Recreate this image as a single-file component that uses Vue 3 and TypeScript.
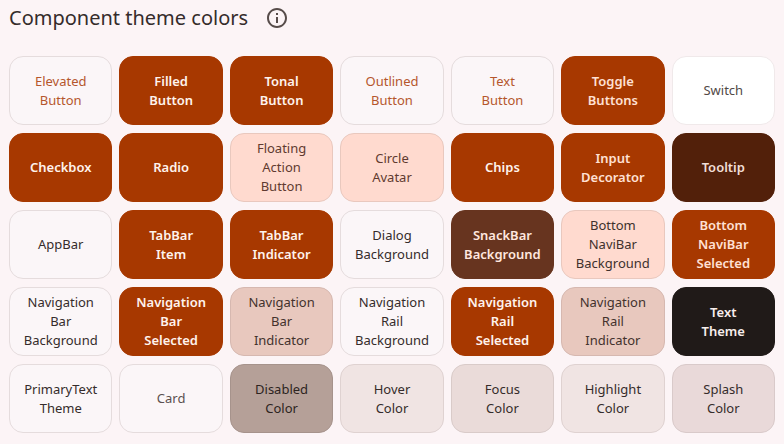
<script setup lang="ts">
interface Swatch {
  lines: string[]
  tone: string
}

const swatches: Swatch[] = [
  { lines: ['Elevated', 'Button'], tone: 'surface accent' },
  { lines: ['Filled', 'Button'], tone: 'primary' },
  { lines: ['Tonal', 'Button'], tone: 'primary' },
  { lines: ['Outlined', 'Button'], tone: 'surface accent' },
  { lines: ['Text', 'Button'], tone: 'surface accent' },
  { lines: ['Toggle', 'Buttons'], tone: 'primary blush' },
  { lines: ['Switch'], tone: 'white' },
  { lines: ['Checkbox'], tone: 'primary' },
  { lines: ['Radio'], tone: 'primary' },
  { lines: ['Floating', 'Action', 'Button'], tone: 'container' },
  { lines: ['Circle', 'Avatar'], tone: 'container' },
  { lines: ['Chips'], tone: 'primary' },
  { lines: ['Input', 'Decorator'], tone: 'primary blush' },
  { lines: ['Tooltip'], tone: 'tooltip' },
  { lines: ['AppBar'], tone: 'surface' },
  { lines: ['TabBar', 'Item'], tone: 'primary' },
  { lines: ['TabBar', 'Indicator'], tone: 'primary' },
  { lines: ['Dialog', 'Background'], tone: 'surface' },
  { lines: ['SnackBar', 'Background'], tone: 'snackbar' },
  { lines: ['Bottom', 'NaviBar', 'Background'], tone: 'container deep' },
  { lines: ['Bottom', 'NaviBar', 'Selected'], tone: 'primary blush' },
  { lines: ['Navigation', 'Bar', 'Background'], tone: 'surface' },
  { lines: ['Navigation', 'Bar', 'Selected'], tone: 'primary' },
  { lines: ['Navigation', 'Bar', 'Indicator'], tone: 'indicator' },
  { lines: ['Navigation', 'Rail', 'Background'], tone: 'surface' },
  { lines: ['Navigation', 'Rail', 'Selected'], tone: 'primary' },
  { lines: ['Navigation', 'Rail', 'Indicator'], tone: 'indicator' },
  { lines: ['Text', 'Theme'], tone: 'ink' },
  { lines: ['PrimaryText', 'Theme'], tone: 'surface' },
  { lines: ['Card'], tone: 'surface muted' },
  { lines: ['Disabled', 'Color'], tone: 'disabled' },
  { lines: ['Hover', 'Color'], tone: 'hover' },
  { lines: ['Focus', 'Color'], tone: 'focus' },
  { lines: ['Highlight', 'Color'], tone: 'hover' },
  { lines: ['Splash', 'Color'], tone: 'splash' },
]
</script>

<template>
  <main class="panel">
    <header class="heading">
      <h1>Component theme colors</h1>
      <button class="info" type="button" aria-label="About component theme colors">
        <svg viewBox="0 0 24 24" aria-hidden="true">
          <path d="M11 7h2v2h-2zm0 4h2v6h-2zm1-9C6.480 2 2 6.480 2 12s4.480 10 10 10 10-4.480 10-10S17.520 2 12 2zm0 18c-4.410 0-8-3.590-8-8s3.590-8 8-8 8 3.590 8 8-3.590 8-8 8z" />
        </svg>
      </button>
    </header>
    <ul class="swatches">
      <li v-for="swatch in swatches" :key="swatch.lines.join(' ')" class="swatch" :class="swatch.tone">
        <span v-for="line in swatch.lines" :key="line">{{ line }}</span>
      </li>
    </ul>
  </main>
</template>

<style>
body {
  margin: 0;
  background: #fcf4f6;
}
</style>

<style scoped>
.panel {
  padding: 4px 9px 10px;
  font-family: "Noto Sans", sans-serif;
  color: #352c2b;
}

.heading {
  display: flex;
  align-items: center;
  gap: 17px;
  height: 28px;
  margin-bottom: 24px;
}

h1 {
  margin: 0;
  font-size: 20px;
  line-height: 28px;
  font-weight: 400;
}

.info {
  display: flex;
  padding: 0;
  border: 0;
  background: none;
  color: #574c4a;
  cursor: pointer;
}

.info svg {
  width: 24px;
  height: 24px;
  fill: currentColor;
}

.swatches {
  display: grid;
  grid-template-columns: repeat(7, minmax(0, 1fr));
  grid-auto-rows: minmax(69px, auto);
  gap: 8px 7px;
  margin: 0;
  padding: 0;
  list-style: none;
}

.swatch {
  display: flex;
  flex-direction: column;
  align-items: center;
  justify-content: center;
  box-sizing: border-box;
  border: 1px solid #e5dcdd;
  border-radius: 14px;
  font-size: 13px;
  line-height: 19px;
  text-align: center;
}

.surface {
  background: #fbf6f8;
}

.accent {
  color: #b5562d;
}

.muted {
  color: #5a504f;
}

.white {
  background: #fff;
  border-color: #f0e9ea;
  color: #514947;
}

.primary,
.tooltip,
.snackbar,
.ink {
  font-weight: 600;
}

.primary {
  background: #a73800;
  border-color: #a73800;
  color: #fff3ed;
}

.blush {
  color: #ffe0d4;
}

.container {
  background: #ffdacf;
  border-color: #e9c8be;
  color: #5f3a30;
}

.deep {
  color: #40312d;
}

.tooltip {
  background: #52200a;
  border-color: #52200a;
  color: #f1ded7;
}

.snackbar {
  background: #67341f;
  border-color: #67341f;
  color: #ffe7df;
}

.indicator {
  background: #e8c8be;
  border-color: #d6b8b0;
  color: #43322d;
}

.ink {
  background: #201a18;
  border-color: #201a18;
  color: #f7eeec;
}

.disabled {
  background: #b5a098;
  border-color: #a6938c;
  color: #2d2421;
}

.hover {
  background: #f0e4e3;
  border-color: #dfd2d1;
}

.focus {
  background: #eadbd9;
  border-color: #d9cbc9;
}

.splash {
  background: #e9d9d9;
  border-color: #d9caca;
}
</style>
